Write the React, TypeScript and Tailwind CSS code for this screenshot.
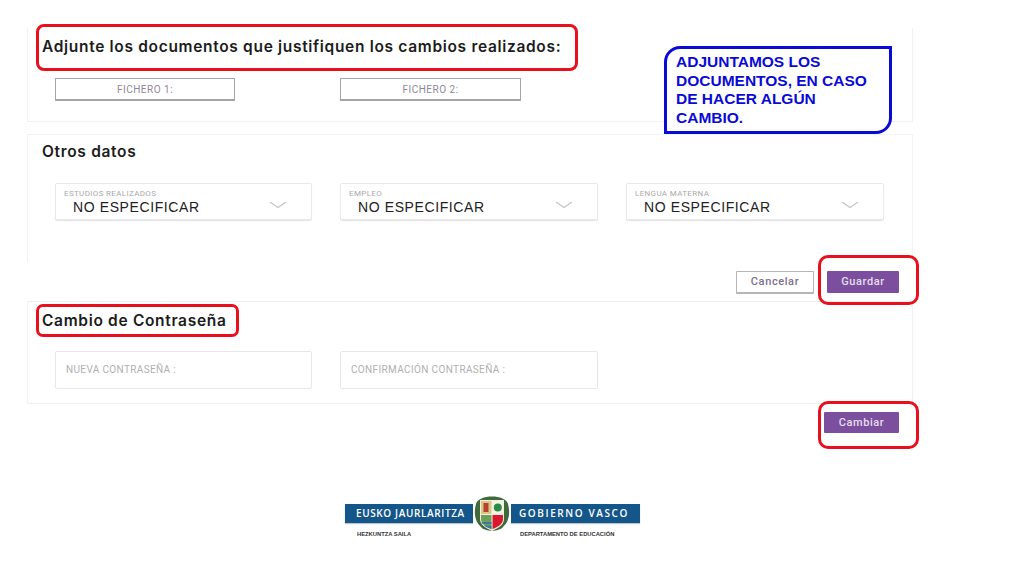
import React from "react";

const head = "font-['Inter',sans-serif] font-semibold text-[15.5px] tracking-[0.68px] text-[#1c1c1c] whitespace-nowrap";

function Chevron() {
  return (
    <svg width="18" height="8" viewBox="0 0 18 8" fill="none" className="absolute right-[24px] top-[17px]">
      <path d="M1 1 L9 6.5 L17 1" stroke="#c4c4c4" strokeWidth="1.2" />
    </svg>
  );
}

function Select({ label }: { label: string }) {
  return (
    <div className="relative h-[37px] border border-[#e9e9ec] rounded-[2px] shadow-[0_1px_1px_#e4e4e6] bg-white">
      <div className="pl-[8px] pt-[5px] text-[8px] leading-[9px] tracking-[0.35px] text-[#a9a9a9] font-['Roboto',sans-serif] whitespace-nowrap">{label}</div>
      <div className="pl-[17px] mt-[1px] text-[14px] leading-[16px] tracking-[0.6px] text-[#222] font-['Liberation_Sans',sans-serif] whitespace-nowrap">NO ESPECIFICAR</div>
      <Chevron />
    </div>
  );
}

function PassField({ label }: { label: string }) {
  return (
    <div className="h-[38px] flex items-center pl-[10px] pb-[1px] border border-[#e7e7ea] rounded-[2px] bg-white text-[10px] tracking-[0.36px] text-[#b0b0b0] font-['Roboto',sans-serif] whitespace-nowrap">
      {label}
    </div>
  );
}

function FileBox({ label }: { label: string }) {
  return (
    <div className="h-[23px] border border-b-2 border-[#a5a5a7] flex items-center justify-center text-[10px] tracking-[0.5px] text-[#8f8799] font-['Roboto',sans-serif] bg-white">
      {label}
    </div>
  );
}

function Shield() {
  return (
    <svg width="38" height="38" viewBox="0 0 38 38" className="shrink-0 -my-[10px] -mx-[1px] relative">
      <rect x="0" y="0" width="38" height="38" fill="#ffffff" />
      <path d="M3 9 C1 16 1 26 8 32 C12 37 26 37 30 32 C37 26 37 16 35 9 C33 -1 5 -1 3 9 Z" fill="#3f6b3c" />
      <path d="M7 5 H31 V24 C31 30 25 33 19 36 C13 33 7 30 7 24 Z" fill="#f3efe0" />
      <path d="M8 6 H18.5 V19 H8 Z" fill="#d9c688" />
      <path d="M10.5 8 L15.5 8 L15.5 17 L10.5 17 Z" fill="#b5432f" />
      <path d="M19.5 6 H30 V19 H19.5 Z" fill="#f5f3e6" />
      <circle cx="24.8" cy="12.5" r="4" fill="#2e8b45" />
      <path d="M8 20 H18.5 V34 C13 32 8 29 8 24 Z" fill="#6fa05a" />
      <path d="M8.5 27 H18.5 V29 H9.5 Z M10.5 30.5 H18.5 V34 C15.5 33 13 32 10.5 30.5 Z" fill="#3b78a8" />
      <path d="M19.5 20 H30 V24 C30 29 25 32 19.5 34 Z" fill="#d8182c" />
    </svg>
  );
}

function Logo() {
  return (
    <div className="w-[295px]">
      <div className="h-[19px] bg-[#15568a] shadow-[0_1px_1px_#b8c4d0] flex items-center text-white font-['Open_Sans',sans-serif] font-semibold text-[10px] whitespace-nowrap">
        <span className="w-[129px] pl-[11px] tracking-[0.62px]">EUSKO JAURLARITZA</span>
        <Shield />
        <span className="pl-[9px] tracking-[1.6px]">GOBIERNO VASCO</span>
      </div>
      <div className="flex mt-[7px] text-[5.8px] leading-[8px] text-[#333] font-['Liberation_Sans',sans-serif] font-bold whitespace-nowrap">
        <span className="w-[175px] pl-[12px]">HEZKUNTZA SAILA</span>
        <span>DEPARTAMENTO DE EDUCACIÓN</span>
      </div>
    </div>
  );
}

export default function App() {
  return (
    <div className="relative w-[1024px] h-[576px] overflow-hidden bg-white">
      <div className="w-[886px] ml-[27px] pt-[28px]">
        {/* Adjuntos */}
        <section className="h-[94px] border-b border-l border-r border-[#f1f1f3] pl-[14px]">
          <h2 className={`${head} leading-[20px] pt-[9px]`}>
            Adjunte los documentos que justifiquen los cambios realizados:
          </h2>
          <div className="grid grid-cols-[180px_181px] gap-x-[105px] pl-[13px] pt-[21px]">
            <FileBox label="FICHERO 1:" />
            <FileBox label="FICHERO 2:" />
          </div>
        </section>

        {/* Otros datos */}
        <section className="mt-[12px] h-[128px] border-t border-l border-r border-[#f3f3f5] pl-[14px]">
          <h2 className={`${head} leading-[18px] pt-[8px]`}>Otros datos</h2>
          <div className="grid grid-cols-[257px_258px_258px] gap-x-[28px] pl-[13px] pt-[22px]">
            <Select label="ESTUDIOS REALIZADOS" />
            <Select label="EMPLEO" />
            <Select label="LENGUA MATERNA" />
          </div>
        </section>

        <div className="flex justify-end items-start gap-[13px] pr-[14px] pt-[9px] h-[40px] border-b border-[#eeeef0]">
          <button className="w-[78px] h-[23px] border border-b-2 border-[#b5b5b7] rounded-[1px] bg-white text-[11px] tracking-[0.6px] text-[#7d6f8d] font-['Roboto',sans-serif] font-medium">
            Cancelar
          </button>
          <button className="w-[72px] h-[22px] bg-[#7b4f9d] rounded-[1px] text-[11px] tracking-[0.6px] text-[#e6deef] font-['Roboto',sans-serif] font-medium">
            Guardar
          </button>
        </div>

        {/* Contraseña */}
        <section className="h-[102px] border-b border-l border-r border-[#f1f1f3] pl-[14px]">
          <h2 className={`${head} leading-[20px] pt-[9px]`}>Cambio de Contraseña</h2>
          <div className="grid grid-cols-[257px_258px] gap-x-[28px] pl-[13px] pt-[20px]">
            <PassField label="NUEVA CONTRASEÑA :" />
            <PassField label="CONFIRMACIÓN CONTRASEÑA :" />
          </div>
        </section>

        <div className="flex justify-end pr-[14px] pt-[8px]">
          <button className="w-[75px] h-[21px] pt-[1px] bg-[#7b4f9d] rounded-[1px] text-[11px] tracking-[0.6px] text-[#e6deef] font-['Roboto',sans-serif] font-medium">
            Cambiar
          </button>
        </div>
      </div>

      <div className="mt-[71px] ml-[345px] w-[295px]">
        <Logo />
      </div>

      {/* Annotations */}
      <div className="absolute left-[36px] top-[24px] w-[542px] h-[47px] border-[3px] border-[#e8101c] rounded-[8px]" />
      <div className="absolute left-[36px] top-[304px] w-[203px] h-[33px] border-[3px] border-[#e8101c] rounded-[7px]" />
      <div className="absolute left-[818px] top-[255px] w-[101px] h-[50px] border-[3px] border-[#e8101c] rounded-[10px]" />
      <div className="absolute left-[818px] top-[401px] w-[101px] h-[48px] border-[3px] border-[#e8101c] rounded-[10px]" />
      <div className="absolute left-[664px] top-[46px] w-[228px] h-[88px] bg-white border-[3px] border-[#0a0ad6] rounded-tl-[16px] rounded-br-[16px] pl-[9px] pt-[4px] text-[15.5px] leading-[18.7px] font-bold text-[#0a0ad6] font-['Liberation_Sans',sans-serif]">
        ADJUNTAMOS LOS<br />DOCUMENTOS, EN CASO<br />DE HACER ALGÚN<br />CAMBIO.
      </div>
    </div>
  );
}
